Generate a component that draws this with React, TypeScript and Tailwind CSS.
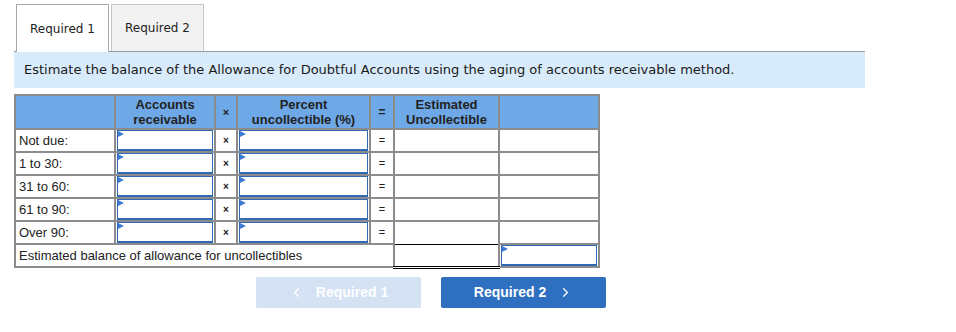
import { ChevronLeft, ChevronRight } from "lucide-react";

const rows = ["Not due:", "1 to 30:", "31 to 60:", "61 to 90:", "Over 90:"];

function Marker() {
  return (
    <span className="absolute left-0 top-0 h-0 w-0 border-y-[3px] border-l-[6px] border-y-transparent border-l-[#3b7bd4]" />
  );
}

function InputBox() {
  return (
    <div className="relative h-[21px] w-full border border-b-2 border-[#3169b3] bg-white">
      <Marker />
    </div>
  );
}

const cell = "border-2 border-[#8c8c8c] p-0";

export default function App() {
  return (
    <div className="h-[332px] w-[956px] overflow-hidden bg-white pt-[4px] text-[#222]">
      {/* Tabs */}
      <div className="ml-[14px] flex w-[851px] items-end gap-[2px] border-b border-[#9a9a9a] pl-[2px] font-['DejaVu_Sans',sans-serif] text-[12px]">
        <div className="relative z-10 -mb-px flex h-[48px] w-[93px] items-center justify-center border border-b-0 border-[#a8a8a8] bg-white">
          Required 1
        </div>
        <div className="flex h-[47px] w-[93px] items-center justify-center border border-b-0 border-[#c6c6c6] bg-[#f2f2f2]">
          Required 2
        </div>
      </div>

      {/* Instruction bar */}
      <div className="ml-[14px] flex h-[36px] w-[851px] items-center bg-[#d8ebfa] pl-[10px] font-['DejaVu_Sans',sans-serif] text-[13px] text-[#1a1a1a]">
        Estimate the balance of the Allowance for Doubtful Accounts using the aging of accounts receivable method.
      </div>

      {/* Aging table */}
      <table className="ml-[14px] mt-[6px] w-[586px] table-fixed border-collapse font-['Liberation_Sans',Arial,sans-serif] text-[13px]">
        <colgroup>
          <col className="w-[100px]" />
          <col className="w-[100px]" />
          <col className="w-[22px]" />
          <col className="w-[133px]" />
          <col className="w-[24px]" />
          <col className="w-[105px]" />
          <col className="w-[100px]" />
        </colgroup>
        <thead>
          <tr className="h-[34px] bg-[#6fa8e6] text-center font-bold leading-[15px] text-[#222]">
            <th className={cell}></th>
            <th className={cell}>
              Accounts
              <br />
              receivable
            </th>
            <th className={`${cell} text-[11px]`}>×</th>
            <th className={cell}>
              Percent
              <br />
              uncollectible (%)
            </th>
            <th className={`${cell} text-[12px]`}>=</th>
            <th className={cell}>
              Estimated
              <br />
              Uncollectible
            </th>
            <th className={cell}></th>
          </tr>
        </thead>
        <tbody>
          {rows.map((label, i) => (
            <tr key={label} className="h-[23px] leading-[19px]">
              <td className={`${cell} pl-[3px]`}>{label}</td>
              <td className={`${cell} px-[1px]`}>
                <InputBox />
              </td>
              <td className={`${cell} text-center text-[10px] font-bold`}>×</td>
              <td className={`${cell} px-[1px]`}>
                <InputBox />
              </td>
              <td className={`${cell} text-center text-[11px]`}>=</td>
              <td className={`${cell} ${i === rows.length - 1 ? "border-b-0" : ""}`}></td>
              <td className={cell}></td>
            </tr>
          ))}
          <tr className="h-[23px] leading-[19px]">
            <td colSpan={5} className={`${cell} pl-[3px]`}>
              Estimated balance of allowance for uncollectibles
            </td>
            <td className="border-x-2 border-t border-b-[3px] border-x-[#8c8c8c] border-t-black border-b-black p-0 [border-bottom-style:double]"></td>
            <td className={`${cell} px-[1px]`}>
              <InputBox />
            </td>
          </tr>
        </tbody>
      </table>

      {/* Navigation buttons */}
      <div className="mt-[8px] flex gap-[20px] pl-[256px] font-['Liberation_Sans',Arial,sans-serif] text-[14px] font-bold text-white">
        <button className="flex h-[31px] w-[165px] items-center justify-center gap-[12px] rounded-[2px] bg-[#d5e2f4]">
          <ChevronLeft size={15} strokeWidth={2} />
          Required 1
        </button>
        <button className="flex h-[31px] w-[165px] items-center justify-center gap-[12px] rounded-[2px] bg-[#2f6fbf]">
          Required 2
          <ChevronRight size={15} strokeWidth={2} />
        </button>
      </div>
    </div>
  );
}
